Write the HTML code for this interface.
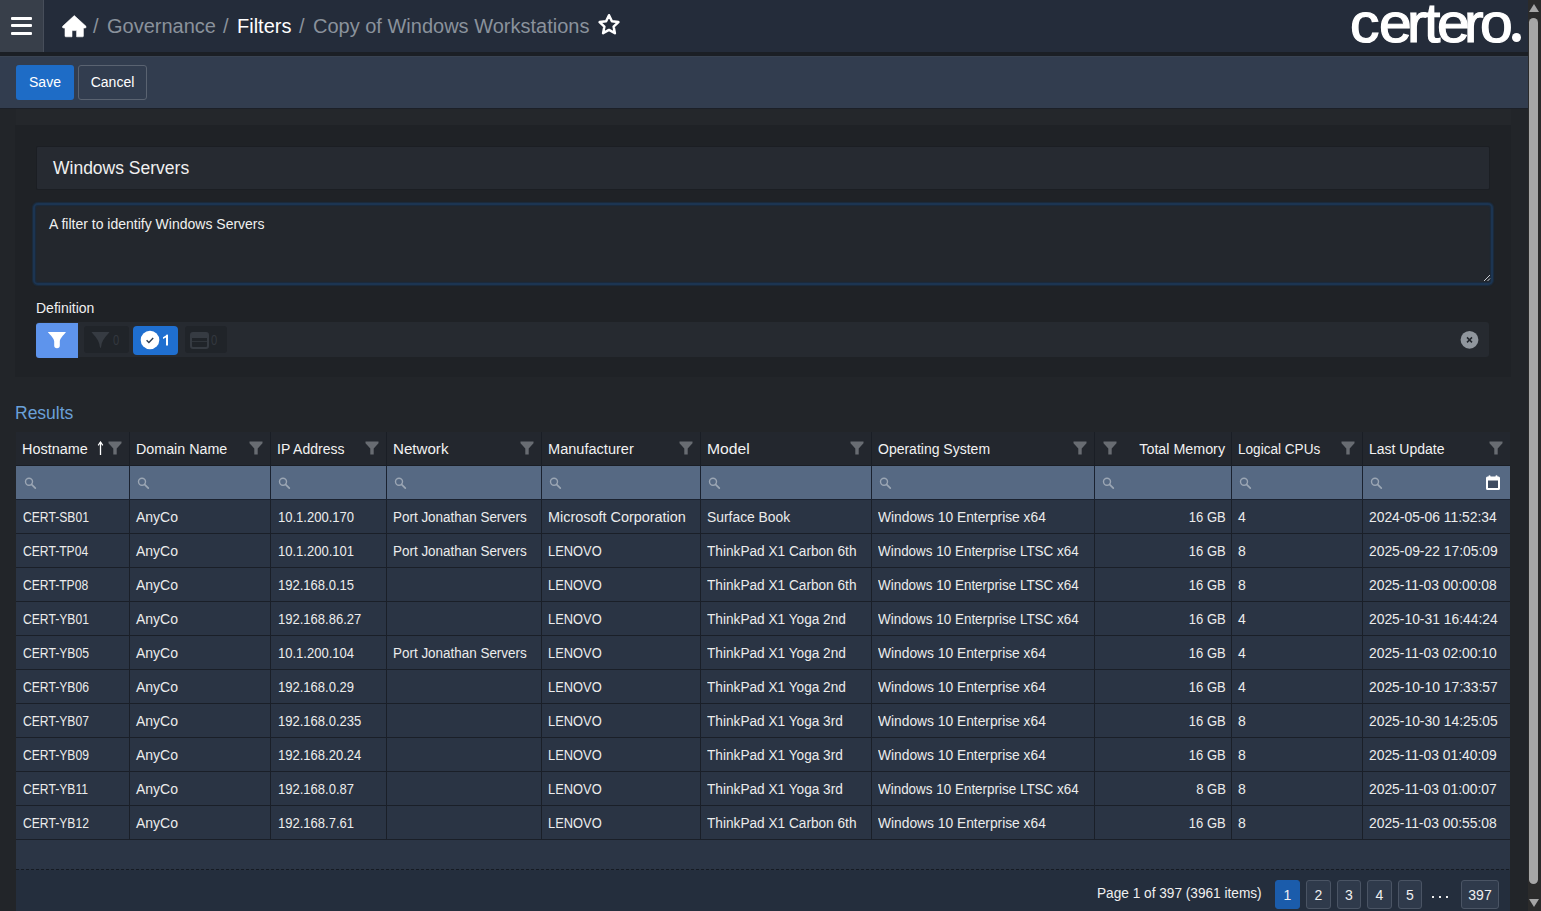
<!DOCTYPE html>
<html><head><meta charset="utf-8">
<style>
*{box-sizing:border-box;margin:0;padding:0}
html,body{width:1541px;height:911px;overflow:hidden;background:#222529;font-family:"Liberation Sans",sans-serif;color:#e8e8e8}
.abs{position:absolute}
#logo span{transform:scaleX(1.07);transform-origin:left top}
#top{position:absolute;left:0;top:0;width:1528px;height:52px;background:#242c3a}
#ham{position:absolute;left:0;top:0;width:44px;height:52px;background:#383f4a;border-right:1px solid #474e5a}
#ham i{position:absolute;left:11px;width:21px;height:3px;background:#fff;border-radius:1px}
#band{position:absolute;left:0;top:52px;width:1528px;height:4px;background:#1b1f25}
#tool{position:absolute;left:0;top:56px;width:1528px;height:53px;background:#323d4f;border-top:1px solid #394352;border-bottom:1px solid #1c2028}
.crumb{position:absolute;top:14px;font-size:20px;line-height:24px;white-space:pre}
.btn{position:absolute;font-size:14px;line-height:16px;text-align:center;border-radius:3px}
#sb{position:absolute;left:1528px;top:0;width:13px;height:911px;background:#2b2b2b}
#thumb{position:absolute;left:1529px;top:18px;width:9px;height:866px;background:#a6a6a6;border-radius:5px}

#panel{position:absolute;left:15px;top:125px;width:1496px;height:252px;background:#1f2226}
#band2{position:absolute;left:16px;top:109px;width:1495px;height:16px;background:#24272b}
#name{position:absolute;left:36px;top:146px;width:1454px;height:44px;background:#262a31;border:1px solid #1b1e23;border-radius:2px;font-size:17.5px;line-height:20px;padding:11px 0 0 16px;color:#f0f0f0}
#desc{position:absolute;left:33px;top:203px;width:1460px;height:82px;background:#23272d;border:2px solid #1c3552;box-shadow:0 0 1px 1px #1b2c3f,inset 0 0 1px 1px #1b2c3f;border-radius:5px;font-size:14px;line-height:16px;padding:11px 0 0 14px;color:#f0f0f0}
#deflbl{position:absolute;left:36px;top:300px;font-size:14px;line-height:16px;color:#f0f0f0}
#defbar{position:absolute;left:36px;top:322px;width:1453px;height:35px;background:#262a30;border-radius:3px}
#results{position:absolute;left:15px;top:403px;font-size:17.5px;line-height:20px;color:#6aa0d8}
#grid{position:absolute;left:0;top:0}
.hc{position:absolute;top:432px;height:34px;background:#23272e;border-left:1px solid #1a1e25;border-bottom:1px solid #1a1e25}
.c0{border-left:none!important}
.hc .tl{position:absolute;left:6px;top:9px;font-size:14px;line-height:16px;color:#f2f2f2;white-space:nowrap}
.hc .tr{position:absolute;right:6px;top:9px;font-size:14px;line-height:16px;color:#f2f2f2;white-space:nowrap}
.hc .fn{position:absolute;right:7px;top:9px}
.fc{position:absolute;top:466px;height:34px;background:#566983;border-left:1px solid #1a2230;border-bottom:1px solid #1a2230}
.fc .sr{position:absolute;left:7px;top:11px}
.fc.c0 .sr{left:8px}
.dc{position:absolute;height:34px;background:#2a3444;border-left:1px solid #1a1f28;border-bottom:1px solid #1a1f28;font-size:14px;line-height:16px;padding:9px 0 0 6px;color:#ececec;white-space:nowrap}
.dc.r{text-align:right;padding:9px 5px 0 0}
.dc.p7{padding-left:7px}
#empty{position:absolute;left:16px;top:840px;width:1494px;height:29px;background:#2b3545}
#pager{position:absolute;left:16px;top:869px;width:1494px;height:42px;background:#242e3d}
#dash{position:absolute;left:16px;top:869px;width:1494px;height:1px;background:repeating-linear-gradient(90deg,#161b23 0 3px,#283242 3px 5px)}
.pg{position:absolute;top:880px;height:29px;border:1px solid #4a5464;background:#2f3a4b;border-radius:3px;font-size:14px;line-height:16px;padding-top:6px;text-align:center;color:#f0f0f0}
</style></head><body>
<div id="top">
  <div id="ham"><i style="top:17px"></i><i style="top:24px"></i><i style="top:32px"></i></div>
<svg class="abs" style="left:55px;top:6px" width="45" height="40" viewBox="0 0 45 40"><path d="M19.3 9.6 L31 20.3 Q31.6 22 30 22 L28.4 22 L28.4 30 Q28.4 30.8 27.6 30.8 L21.6 30.8 L21.6 24.6 L17 24.6 L17 30.8 L10.8 30.8 Q10 30.8 10 30 L10 22 L8.6 22 Q7 22 7.6 20.3 Z" fill="#fff" stroke="#fff" stroke-width="0.6" stroke-linejoin="round"/></svg>
  <div class="crumb" style="left:93px;color:#8a929c">/</div>
  <div class="crumb" style="left:107px;color:#8a929c">Governance</div>
  <div class="crumb" style="left:223px;color:#8a929c">/</div>
  <div class="crumb" style="left:237px;color:#fff">Filters</div>
  <div class="crumb" style="left:299px;color:#8a929c">/</div>
  <div class="crumb" style="left:313px;color:#8a929c">Copy of Windows Workstations</div>
  <svg class="abs" style="left:596px;top:12px" width="26" height="25" viewBox="0 0 26 25"><path d="M13 3.2 L15.9 9.3 L22.4 10.1 L17.6 14.6 L18.9 21.2 L13 17.9 L7.1 21.2 L8.4 14.6 L3.6 10.1 L10.1 9.3 Z" fill="none" stroke="#fff" stroke-width="2.5" stroke-linejoin="round"/></svg>
  <div id="logo" style="position:absolute;left:0;top:-7px;font-size:55px;line-height:60px;color:#fff;-webkit-text-stroke:1.2px #fff">
<span style="position:absolute;left:1350px">c</span><span style="position:absolute;left:1379px">e</span><span style="position:absolute;left:1407px">r</span><span style="position:absolute;left:1424px">t</span><span style="position:absolute;left:1437px">e</span><span style="position:absolute;left:1464px">r</span><span style="position:absolute;left:1480px">o</span></div>
  <div class="abs" style="left:1512px;top:33px;width:9px;height:9px;border-radius:50%;background:#fff"></div>
</div>
<div id="band"></div>
<div id="tool">
  <div class="btn" style="left:16px;top:8px;width:58px;height:35px;background:#1e6cc6;color:#fff;padding-top:9px">Save</div>
  <div class="btn" style="left:78px;top:8px;width:69px;height:35px;background:#323d4f;border:1px solid #5a6371;color:#fff;padding-top:8px">Cancel</div>
</div>
<div id="sb"></div>
<div id="thumb"></div>
<svg class="abs" style="left:1529px;top:4px" width="10" height="8"><path d="M5 0 L10 8 L0 8Z" fill="#a6a6a6"/></svg>
<svg class="abs" style="left:1529px;top:899px" width="10" height="8"><path d="M0 0 L10 0 L5 8Z" fill="#a6a6a6"/></svg>

<div id="band2"></div><div id="panel"></div>
<div id="name">Windows Servers</div>
<div id="desc">A filter to identify Windows Servers</div>
<svg class="abs" style="left:1482px;top:273px" width="9" height="9" viewBox="0 0 9 9"><path d="M8 2 L2 8 M8 5.5 L5.5 8" stroke="#c8ccd2" stroke-width="1"/></svg>
<div id="deflbl">Definition</div>
<div id="defbar"></div>
<div class="abs" style="left:36px;top:323px;width:42px;height:35px;background:#5e94ec;border-radius:3px 0 0 3px"></div>
<svg class="abs" style="left:47px;top:331px" width="20" height="18" viewBox="0 0 20 18"><path d="M0.8 1 H19 C16.5 4.5 13 7 12.8 10.5 V14.5 Q12.8 17.2 10 17.2 Q7.2 17.2 7.2 14.5 V10.5 C7 7 3.5 4.5 0.8 1 Z" fill="#fff"/></svg>
<div class="abs" style="left:84px;top:326px;width:45px;height:27px;background:#202429;border-radius:3px"></div>
<svg class="abs" style="left:91px;top:331px" width="19" height="18" viewBox="0 0 19 18"><path d="M0.5 1 H18.5 C15 5.5 11 9 10.3 15 Q10 17 9.5 17 Q9 17 8.7 15 C8 9 4 5.5 0.5 1 Z" fill="#363b42"/></svg>
<div class="abs" style="left:113px;top:332px;font-size:14px;line-height:16px;color:#33383f;transform:scaleX(0.8);transform-origin:left center">0</div>
<div class="abs" style="left:133px;top:326px;width:45px;height:29px;background:#1f6fd0;border-radius:4px"></div>
<svg class="abs" style="left:140px;top:330px" width="20" height="20" viewBox="0 0 20 20"><circle cx="10" cy="10" r="9.3" fill="#fff"/><path d="M6.6 10.2 L8.9 12.4 L13.2 8" fill="none" stroke="#2a3a50" stroke-width="1.4"/></svg>
<svg class="abs" style="left:162px;top:334px" width="8" height="12" viewBox="0 0 8 12"><path d="M5 0.8 V11.5" stroke="#fff" stroke-width="2"/><path d="M5.6 0.5 L1 3.2 L1 5 L5 3" fill="#fff"/></svg>
<div class="abs" style="left:185px;top:326px;width:42px;height:27px;background:#202429;border-radius:3px"></div>
<svg class="abs" style="left:190px;top:332px" width="19" height="17" viewBox="0 0 19 17"><rect x="1" y="1" width="17" height="15" rx="2" fill="none" stroke="#363b42" stroke-width="2"/><rect x="1" y="1" width="17" height="5" rx="1" fill="#363b42"/><path d="M2 9.5 H17" stroke="#30353b" stroke-width="1"/></svg>
<div class="abs" style="left:211px;top:332px;font-size:14px;line-height:16px;color:#33383f;transform:scaleX(0.8);transform-origin:left center">0</div>
<svg class="abs" style="left:1460px;top:330px" width="19" height="19" viewBox="0 0 19 19"><circle cx="9.5" cy="9.8" r="8.9" fill="#90969d"/><path d="M7 7.4 L12 12.4 M12 7.4 L7 12.4" stroke="#22262c" stroke-width="1.5"/></svg>
<div id="results">Results</div>
<div id="grid">
<div class="hc c0" style="left:16px;width:113px"><span class="tl" style="transform:scaleX(1.03);transform-origin:left center">Hostname</span><svg class="abs" style="left:81px;top:9px" width="7" height="15" viewBox="0 0 7 15"><path d="M3.5 1 V14" stroke="#fff" stroke-width="1.3"/><path d="M1.2 4.4 L3.5 1 L5.8 4.4" fill="none" stroke="#fff" stroke-width="1.2"/></svg><svg class="fn" width="14" height="14" viewBox="0 0 14 14"><path d="M0.5 0.5 H13.5 V2.2 L8.7 7.6 V13.5 H5.3 V7.6 L0.5 2.2 Z" fill="#686c72"/></svg></div>
<div class="fc c0" style="left:16px;width:113px"><svg class="sr" width="13" height="13" viewBox="0 0 13 13"><circle cx="5" cy="4.8" r="3.5" fill="none" stroke="#9ba6b4" stroke-width="1.4"/><path d="M7.5 7.4 L11.3 11.2" stroke="#9ba6b4" stroke-width="1.7" stroke-linecap="round"/></svg></div>
<div class="hc" style="left:129px;width:141px"><span class="tl" style="transform:scaleX(1.02);transform-origin:left center">Domain Name</span><svg class="fn" width="14" height="14" viewBox="0 0 14 14"><path d="M0.5 0.5 H13.5 V2.2 L8.7 7.6 V13.5 H5.3 V7.6 L0.5 2.2 Z" fill="#686c72"/></svg></div>
<div class="fc" style="left:129px;width:141px"><svg class="sr" width="13" height="13" viewBox="0 0 13 13"><circle cx="5" cy="4.8" r="3.5" fill="none" stroke="#9ba6b4" stroke-width="1.4"/><path d="M7.5 7.4 L11.3 11.2" stroke="#9ba6b4" stroke-width="1.7" stroke-linecap="round"/></svg></div>
<div class="hc" style="left:270px;width:116px"><span class="tl">IP Address</span><svg class="fn" width="14" height="14" viewBox="0 0 14 14"><path d="M0.5 0.5 H13.5 V2.2 L8.7 7.6 V13.5 H5.3 V7.6 L0.5 2.2 Z" fill="#686c72"/></svg></div>
<div class="fc" style="left:270px;width:116px"><svg class="sr" width="13" height="13" viewBox="0 0 13 13"><circle cx="5" cy="4.8" r="3.5" fill="none" stroke="#9ba6b4" stroke-width="1.4"/><path d="M7.5 7.4 L11.3 11.2" stroke="#9ba6b4" stroke-width="1.7" stroke-linecap="round"/></svg></div>
<div class="hc" style="left:386px;width:155px"><span class="tl" style="transform:scaleX(1.08);transform-origin:left center">Network</span><svg class="fn" width="14" height="14" viewBox="0 0 14 14"><path d="M0.5 0.5 H13.5 V2.2 L8.7 7.6 V13.5 H5.3 V7.6 L0.5 2.2 Z" fill="#686c72"/></svg></div>
<div class="fc" style="left:386px;width:155px"><svg class="sr" width="13" height="13" viewBox="0 0 13 13"><circle cx="5" cy="4.8" r="3.5" fill="none" stroke="#9ba6b4" stroke-width="1.4"/><path d="M7.5 7.4 L11.3 11.2" stroke="#9ba6b4" stroke-width="1.7" stroke-linecap="round"/></svg></div>
<div class="hc" style="left:541px;width:159px"><span class="tl" style="transform:scaleX(1.04);transform-origin:left center">Manufacturer</span><svg class="fn" width="14" height="14" viewBox="0 0 14 14"><path d="M0.5 0.5 H13.5 V2.2 L8.7 7.6 V13.5 H5.3 V7.6 L0.5 2.2 Z" fill="#686c72"/></svg></div>
<div class="fc" style="left:541px;width:159px"><svg class="sr" width="13" height="13" viewBox="0 0 13 13"><circle cx="5" cy="4.8" r="3.5" fill="none" stroke="#9ba6b4" stroke-width="1.4"/><path d="M7.5 7.4 L11.3 11.2" stroke="#9ba6b4" stroke-width="1.7" stroke-linecap="round"/></svg></div>
<div class="hc" style="left:700px;width:171px"><span class="tl" style="transform:scaleX(1.12);transform-origin:left center">Model</span><svg class="fn" width="14" height="14" viewBox="0 0 14 14"><path d="M0.5 0.5 H13.5 V2.2 L8.7 7.6 V13.5 H5.3 V7.6 L0.5 2.2 Z" fill="#686c72"/></svg></div>
<div class="fc" style="left:700px;width:171px"><svg class="sr" width="13" height="13" viewBox="0 0 13 13"><circle cx="5" cy="4.8" r="3.5" fill="none" stroke="#9ba6b4" stroke-width="1.4"/><path d="M7.5 7.4 L11.3 11.2" stroke="#9ba6b4" stroke-width="1.7" stroke-linecap="round"/></svg></div>
<div class="hc" style="left:871px;width:223px"><span class="tl">Operating System</span><svg class="fn" width="14" height="14" viewBox="0 0 14 14"><path d="M0.5 0.5 H13.5 V2.2 L8.7 7.6 V13.5 H5.3 V7.6 L0.5 2.2 Z" fill="#686c72"/></svg></div>
<div class="fc" style="left:871px;width:223px"><svg class="sr" width="13" height="13" viewBox="0 0 13 13"><circle cx="5" cy="4.8" r="3.5" fill="none" stroke="#9ba6b4" stroke-width="1.4"/><path d="M7.5 7.4 L11.3 11.2" stroke="#9ba6b4" stroke-width="1.7" stroke-linecap="round"/></svg></div>
<div class="hc" style="left:1094px;width:137px"><svg class="abs" style="left:8px;top:9px" width="14" height="14" viewBox="0 0 14 14"><path d="M0.5 0.5 H13.5 V2.2 L8.7 7.6 V13.5 H5.3 V7.6 L0.5 2.2 Z" fill="#686c72"/></svg><span class="tr" style="transform:scaleX(1.02);transform-origin:right center">Total Memory</span></div>
<div class="fc" style="left:1094px;width:137px"><svg class="sr" width="13" height="13" viewBox="0 0 13 13"><circle cx="5" cy="4.8" r="3.5" fill="none" stroke="#9ba6b4" stroke-width="1.4"/><path d="M7.5 7.4 L11.3 11.2" stroke="#9ba6b4" stroke-width="1.7" stroke-linecap="round"/></svg></div>
<div class="hc" style="left:1231px;width:131px"><span class="tl" style="transform:scaleX(0.97);transform-origin:left center">Logical CPUs</span><svg class="fn" width="14" height="14" viewBox="0 0 14 14"><path d="M0.5 0.5 H13.5 V2.2 L8.7 7.6 V13.5 H5.3 V7.6 L0.5 2.2 Z" fill="#686c72"/></svg></div>
<div class="fc" style="left:1231px;width:131px"><svg class="sr" width="13" height="13" viewBox="0 0 13 13"><circle cx="5" cy="4.8" r="3.5" fill="none" stroke="#9ba6b4" stroke-width="1.4"/><path d="M7.5 7.4 L11.3 11.2" stroke="#9ba6b4" stroke-width="1.7" stroke-linecap="round"/></svg></div>
<div class="hc" style="left:1362px;width:148px"><span class="tl">Last Update</span><svg class="fn" width="14" height="14" viewBox="0 0 14 14"><path d="M0.5 0.5 H13.5 V2.2 L8.7 7.6 V13.5 H5.3 V7.6 L0.5 2.2 Z" fill="#686c72"/></svg></div>
<div class="fc" style="left:1362px;width:148px"><svg class="sr" width="13" height="13" viewBox="0 0 13 13"><circle cx="5" cy="4.8" r="3.5" fill="none" stroke="#9ba6b4" stroke-width="1.4"/><path d="M7.5 7.4 L11.3 11.2" stroke="#9ba6b4" stroke-width="1.7" stroke-linecap="round"/></svg><svg class="abs" style="left:122px;top:8px" width="16" height="17" viewBox="0 0 16 17"><rect x="2.5" y="5.5" width="11" height="9" fill="#3f4c60"/><path d="M2.5 2.5 H13.5 Q15 2.5 15 4 V14.5 Q15 16 13.5 16 H2.5 Q1 16 1 14.5 V4 Q1 2.5 2.5 2.5Z M3 6.5 V14 H13 V6.5Z" fill="#fff" fill-rule="evenodd"/><rect x="3.5" y="1.2" width="2" height="2.5" rx="1" fill="#fff"/><rect x="10.5" y="1.2" width="2" height="2.5" rx="1" fill="#fff"/></svg></div>
<div class="dc c0 p7" style="left:16px;top:500px;width:113px"><span style="display:inline-block;transform:scaleX(0.867);transform-origin:left center">CERT-SB01</span></div>
<div class="dc" style="left:129px;top:500px;width:141px">AnyCo</div>
<div class="dc p7" style="left:270px;top:500px;width:116px"><span style="display:inline-block;transform:scaleX(0.93);transform-origin:left center">10.1.200.170</span></div>
<div class="dc" style="left:386px;top:500px;width:155px"><span style="display:inline-block;transform:scaleX(0.96);transform-origin:left center">Port Jonathan Servers</span></div>
<div class="dc" style="left:541px;top:500px;width:159px"><span style="display:inline-block;transform:scaleX(1.03);transform-origin:left center">Microsoft Corporation</span></div>
<div class="dc" style="left:700px;top:500px;width:171px"><span style="display:inline-block;transform:scaleX(0.99);transform-origin:left center">Surface Book</span></div>
<div class="dc" style="left:871px;top:500px;width:223px"><span style="display:inline-block;transform:scaleX(0.985);transform-origin:left center">Windows 10 Enterprise x64</span></div>
<div class="dc r" style="left:1094px;top:500px;width:137px"><span style="display:inline-block;transform:scaleX(0.93);transform-origin:right center">16 GB</span></div>
<div class="dc" style="left:1231px;top:500px;width:131px">4</div>
<div class="dc" style="left:1362px;top:500px;width:148px"><span style="display:inline-block;transform:scaleX(0.99);transform-origin:left center">2024-05-06 11:52:34</span></div>
<div class="dc c0 p7" style="left:16px;top:534px;width:113px"><span style="display:inline-block;transform:scaleX(0.867);transform-origin:left center">CERT-TP04</span></div>
<div class="dc" style="left:129px;top:534px;width:141px">AnyCo</div>
<div class="dc p7" style="left:270px;top:534px;width:116px"><span style="display:inline-block;transform:scaleX(0.93);transform-origin:left center">10.1.200.101</span></div>
<div class="dc" style="left:386px;top:534px;width:155px"><span style="display:inline-block;transform:scaleX(0.96);transform-origin:left center">Port Jonathan Servers</span></div>
<div class="dc" style="left:541px;top:534px;width:159px"><span style="display:inline-block;transform:scaleX(0.92);transform-origin:left center">LENOVO</span></div>
<div class="dc" style="left:700px;top:534px;width:171px"><span style="display:inline-block;transform:scaleX(0.975);transform-origin:left center">ThinkPad X1 Carbon 6th</span></div>
<div class="dc" style="left:871px;top:534px;width:223px"><span style="display:inline-block;transform:scaleX(0.96);transform-origin:left center">Windows 10 Enterprise LTSC x64</span></div>
<div class="dc r" style="left:1094px;top:534px;width:137px"><span style="display:inline-block;transform:scaleX(0.93);transform-origin:right center">16 GB</span></div>
<div class="dc" style="left:1231px;top:534px;width:131px">8</div>
<div class="dc" style="left:1362px;top:534px;width:148px"><span style="display:inline-block;transform:scaleX(0.99);transform-origin:left center">2025-09-22 17:05:09</span></div>
<div class="dc c0 p7" style="left:16px;top:568px;width:113px"><span style="display:inline-block;transform:scaleX(0.867);transform-origin:left center">CERT-TP08</span></div>
<div class="dc" style="left:129px;top:568px;width:141px">AnyCo</div>
<div class="dc p7" style="left:270px;top:568px;width:116px"><span style="display:inline-block;transform:scaleX(0.93);transform-origin:left center">192.168.0.15</span></div>
<div class="dc" style="left:386px;top:568px;width:155px"></div>
<div class="dc" style="left:541px;top:568px;width:159px"><span style="display:inline-block;transform:scaleX(0.92);transform-origin:left center">LENOVO</span></div>
<div class="dc" style="left:700px;top:568px;width:171px"><span style="display:inline-block;transform:scaleX(0.975);transform-origin:left center">ThinkPad X1 Carbon 6th</span></div>
<div class="dc" style="left:871px;top:568px;width:223px"><span style="display:inline-block;transform:scaleX(0.96);transform-origin:left center">Windows 10 Enterprise LTSC x64</span></div>
<div class="dc r" style="left:1094px;top:568px;width:137px"><span style="display:inline-block;transform:scaleX(0.93);transform-origin:right center">16 GB</span></div>
<div class="dc" style="left:1231px;top:568px;width:131px">8</div>
<div class="dc" style="left:1362px;top:568px;width:148px"><span style="display:inline-block;transform:scaleX(0.99);transform-origin:left center">2025-11-03 00:00:08</span></div>
<div class="dc c0 p7" style="left:16px;top:602px;width:113px"><span style="display:inline-block;transform:scaleX(0.867);transform-origin:left center">CERT-YB01</span></div>
<div class="dc" style="left:129px;top:602px;width:141px">AnyCo</div>
<div class="dc p7" style="left:270px;top:602px;width:116px"><span style="display:inline-block;transform:scaleX(0.93);transform-origin:left center">192.168.86.27</span></div>
<div class="dc" style="left:386px;top:602px;width:155px"></div>
<div class="dc" style="left:541px;top:602px;width:159px"><span style="display:inline-block;transform:scaleX(0.92);transform-origin:left center">LENOVO</span></div>
<div class="dc" style="left:700px;top:602px;width:171px"><span style="display:inline-block;transform:scaleX(0.975);transform-origin:left center">ThinkPad X1 Yoga 2nd</span></div>
<div class="dc" style="left:871px;top:602px;width:223px"><span style="display:inline-block;transform:scaleX(0.96);transform-origin:left center">Windows 10 Enterprise LTSC x64</span></div>
<div class="dc r" style="left:1094px;top:602px;width:137px"><span style="display:inline-block;transform:scaleX(0.93);transform-origin:right center">16 GB</span></div>
<div class="dc" style="left:1231px;top:602px;width:131px">4</div>
<div class="dc" style="left:1362px;top:602px;width:148px"><span style="display:inline-block;transform:scaleX(0.99);transform-origin:left center">2025-10-31 16:44:24</span></div>
<div class="dc c0 p7" style="left:16px;top:636px;width:113px"><span style="display:inline-block;transform:scaleX(0.867);transform-origin:left center">CERT-YB05</span></div>
<div class="dc" style="left:129px;top:636px;width:141px">AnyCo</div>
<div class="dc p7" style="left:270px;top:636px;width:116px"><span style="display:inline-block;transform:scaleX(0.93);transform-origin:left center">10.1.200.104</span></div>
<div class="dc" style="left:386px;top:636px;width:155px"><span style="display:inline-block;transform:scaleX(0.96);transform-origin:left center">Port Jonathan Servers</span></div>
<div class="dc" style="left:541px;top:636px;width:159px"><span style="display:inline-block;transform:scaleX(0.92);transform-origin:left center">LENOVO</span></div>
<div class="dc" style="left:700px;top:636px;width:171px"><span style="display:inline-block;transform:scaleX(0.975);transform-origin:left center">ThinkPad X1 Yoga 2nd</span></div>
<div class="dc" style="left:871px;top:636px;width:223px"><span style="display:inline-block;transform:scaleX(0.985);transform-origin:left center">Windows 10 Enterprise x64</span></div>
<div class="dc r" style="left:1094px;top:636px;width:137px"><span style="display:inline-block;transform:scaleX(0.93);transform-origin:right center">16 GB</span></div>
<div class="dc" style="left:1231px;top:636px;width:131px">4</div>
<div class="dc" style="left:1362px;top:636px;width:148px"><span style="display:inline-block;transform:scaleX(0.99);transform-origin:left center">2025-11-03 02:00:10</span></div>
<div class="dc c0 p7" style="left:16px;top:670px;width:113px"><span style="display:inline-block;transform:scaleX(0.867);transform-origin:left center">CERT-YB06</span></div>
<div class="dc" style="left:129px;top:670px;width:141px">AnyCo</div>
<div class="dc p7" style="left:270px;top:670px;width:116px"><span style="display:inline-block;transform:scaleX(0.93);transform-origin:left center">192.168.0.29</span></div>
<div class="dc" style="left:386px;top:670px;width:155px"></div>
<div class="dc" style="left:541px;top:670px;width:159px"><span style="display:inline-block;transform:scaleX(0.92);transform-origin:left center">LENOVO</span></div>
<div class="dc" style="left:700px;top:670px;width:171px"><span style="display:inline-block;transform:scaleX(0.975);transform-origin:left center">ThinkPad X1 Yoga 2nd</span></div>
<div class="dc" style="left:871px;top:670px;width:223px"><span style="display:inline-block;transform:scaleX(0.985);transform-origin:left center">Windows 10 Enterprise x64</span></div>
<div class="dc r" style="left:1094px;top:670px;width:137px"><span style="display:inline-block;transform:scaleX(0.93);transform-origin:right center">16 GB</span></div>
<div class="dc" style="left:1231px;top:670px;width:131px">4</div>
<div class="dc" style="left:1362px;top:670px;width:148px"><span style="display:inline-block;transform:scaleX(0.99);transform-origin:left center">2025-10-10 17:33:57</span></div>
<div class="dc c0 p7" style="left:16px;top:704px;width:113px"><span style="display:inline-block;transform:scaleX(0.867);transform-origin:left center">CERT-YB07</span></div>
<div class="dc" style="left:129px;top:704px;width:141px">AnyCo</div>
<div class="dc p7" style="left:270px;top:704px;width:116px"><span style="display:inline-block;transform:scaleX(0.93);transform-origin:left center">192.168.0.235</span></div>
<div class="dc" style="left:386px;top:704px;width:155px"></div>
<div class="dc" style="left:541px;top:704px;width:159px"><span style="display:inline-block;transform:scaleX(0.92);transform-origin:left center">LENOVO</span></div>
<div class="dc" style="left:700px;top:704px;width:171px"><span style="display:inline-block;transform:scaleX(0.975);transform-origin:left center">ThinkPad X1 Yoga 3rd</span></div>
<div class="dc" style="left:871px;top:704px;width:223px"><span style="display:inline-block;transform:scaleX(0.985);transform-origin:left center">Windows 10 Enterprise x64</span></div>
<div class="dc r" style="left:1094px;top:704px;width:137px"><span style="display:inline-block;transform:scaleX(0.93);transform-origin:right center">16 GB</span></div>
<div class="dc" style="left:1231px;top:704px;width:131px">8</div>
<div class="dc" style="left:1362px;top:704px;width:148px"><span style="display:inline-block;transform:scaleX(0.99);transform-origin:left center">2025-10-30 14:25:05</span></div>
<div class="dc c0 p7" style="left:16px;top:738px;width:113px"><span style="display:inline-block;transform:scaleX(0.867);transform-origin:left center">CERT-YB09</span></div>
<div class="dc" style="left:129px;top:738px;width:141px">AnyCo</div>
<div class="dc p7" style="left:270px;top:738px;width:116px"><span style="display:inline-block;transform:scaleX(0.93);transform-origin:left center">192.168.20.24</span></div>
<div class="dc" style="left:386px;top:738px;width:155px"></div>
<div class="dc" style="left:541px;top:738px;width:159px"><span style="display:inline-block;transform:scaleX(0.92);transform-origin:left center">LENOVO</span></div>
<div class="dc" style="left:700px;top:738px;width:171px"><span style="display:inline-block;transform:scaleX(0.975);transform-origin:left center">ThinkPad X1 Yoga 3rd</span></div>
<div class="dc" style="left:871px;top:738px;width:223px"><span style="display:inline-block;transform:scaleX(0.985);transform-origin:left center">Windows 10 Enterprise x64</span></div>
<div class="dc r" style="left:1094px;top:738px;width:137px"><span style="display:inline-block;transform:scaleX(0.93);transform-origin:right center">16 GB</span></div>
<div class="dc" style="left:1231px;top:738px;width:131px">8</div>
<div class="dc" style="left:1362px;top:738px;width:148px"><span style="display:inline-block;transform:scaleX(0.99);transform-origin:left center">2025-11-03 01:40:09</span></div>
<div class="dc c0 p7" style="left:16px;top:772px;width:113px"><span style="display:inline-block;transform:scaleX(0.867);transform-origin:left center">CERT-YB11</span></div>
<div class="dc" style="left:129px;top:772px;width:141px">AnyCo</div>
<div class="dc p7" style="left:270px;top:772px;width:116px"><span style="display:inline-block;transform:scaleX(0.93);transform-origin:left center">192.168.0.87</span></div>
<div class="dc" style="left:386px;top:772px;width:155px"></div>
<div class="dc" style="left:541px;top:772px;width:159px"><span style="display:inline-block;transform:scaleX(0.92);transform-origin:left center">LENOVO</span></div>
<div class="dc" style="left:700px;top:772px;width:171px"><span style="display:inline-block;transform:scaleX(0.975);transform-origin:left center">ThinkPad X1 Yoga 3rd</span></div>
<div class="dc" style="left:871px;top:772px;width:223px"><span style="display:inline-block;transform:scaleX(0.96);transform-origin:left center">Windows 10 Enterprise LTSC x64</span></div>
<div class="dc r" style="left:1094px;top:772px;width:137px"><span style="display:inline-block;transform:scaleX(0.93);transform-origin:right center">8 GB</span></div>
<div class="dc" style="left:1231px;top:772px;width:131px">8</div>
<div class="dc" style="left:1362px;top:772px;width:148px"><span style="display:inline-block;transform:scaleX(0.99);transform-origin:left center">2025-11-03 01:00:07</span></div>
<div class="dc c0 p7" style="left:16px;top:806px;width:113px"><span style="display:inline-block;transform:scaleX(0.867);transform-origin:left center">CERT-YB12</span></div>
<div class="dc" style="left:129px;top:806px;width:141px">AnyCo</div>
<div class="dc p7" style="left:270px;top:806px;width:116px"><span style="display:inline-block;transform:scaleX(0.93);transform-origin:left center">192.168.7.61</span></div>
<div class="dc" style="left:386px;top:806px;width:155px"></div>
<div class="dc" style="left:541px;top:806px;width:159px"><span style="display:inline-block;transform:scaleX(0.92);transform-origin:left center">LENOVO</span></div>
<div class="dc" style="left:700px;top:806px;width:171px"><span style="display:inline-block;transform:scaleX(0.975);transform-origin:left center">ThinkPad X1 Carbon 6th</span></div>
<div class="dc" style="left:871px;top:806px;width:223px"><span style="display:inline-block;transform:scaleX(0.985);transform-origin:left center">Windows 10 Enterprise x64</span></div>
<div class="dc r" style="left:1094px;top:806px;width:137px"><span style="display:inline-block;transform:scaleX(0.93);transform-origin:right center">16 GB</span></div>
<div class="dc" style="left:1231px;top:806px;width:131px">8</div>
<div class="dc" style="left:1362px;top:806px;width:148px"><span style="display:inline-block;transform:scaleX(0.99);transform-origin:left center">2025-11-03 00:55:08</span></div>
</div>
<div id="empty"></div>
<div id="pager"></div><div id="dash"></div>
<div class="abs" style="left:1097px;top:885px;font-size:14px;line-height:16px;color:#f0f0f0;transform:scaleX(0.975);transform-origin:left center">Page 1 of 397 (3961 items)</div>
<div class="pg" style="left:1275px;width:25px;background:#1b5cab;border-color:#1b5cab">1</div>
<div class="pg" style="left:1306px;width:25px">2</div>
<div class="pg" style="left:1337px;width:24px">3</div>
<div class="pg" style="left:1367px;width:25px">4</div>
<div class="pg" style="left:1398px;width:24px">5</div>
<div class="abs" style="left:1432px;top:896px;width:2px;height:2px;background:#f0f0f0"></div><div class="abs" style="left:1439px;top:896px;width:2px;height:2px;background:#f0f0f0"></div><div class="abs" style="left:1446px;top:896px;width:2px;height:2px;background:#f0f0f0"></div>
<div class="pg" style="left:1461px;width:38px">397</div>
</body></html>
